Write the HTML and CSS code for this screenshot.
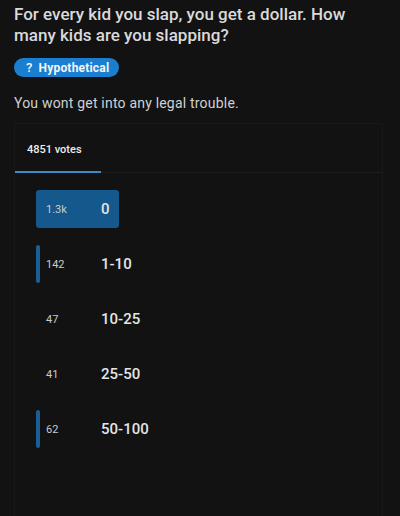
FILE: index.html
```html
<!DOCTYPE html>
<html>
<head>
<meta charset="utf-8">
<link rel="stylesheet" href="styles.css">
</head>
<body>
<div class="page">
  <h1 class="title">For every kid you slap, you get a dollar. How many kids are you slapping?</h1>
  <div class="flair"><span class="q">?</span> Hypothetical</div>
  <p class="body">You wont get into any legal trouble.</p>
  <div class="card">
    <div class="tabs">
      <div class="tab">4851 votes</div>
    </div>
    <div class="options">
      <div class="opt">
        <div class="bar-area"><div class="bar full"></div><span class="count">1.3k</span></div>
        <span class="label">0</span>
      </div>
      <div class="opt">
        <div class="bar-area"><div class="bar thin"></div><span class="count">142</span></div>
        <span class="label">1-10</span>
      </div>
      <div class="opt">
        <div class="bar-area"><span class="count">47</span></div>
        <span class="label">10-25</span>
      </div>
      <div class="opt">
        <div class="bar-area"><span class="count">41</span></div>
        <span class="label">25-50</span>
      </div>
      <div class="opt">
        <div class="bar-area"><div class="bar thin"></div><span class="count">62</span></div>
        <span class="label">50-100</span>
      </div>
    </div>
  </div>
</div>
</body>
</html>
```
FILE: styles.css
```css
html, body {
  margin: 0;
  padding: 0;
  background: #121212;
  height: 100%;
}
body {
  font-family: Roboto, "Noto Sans", "Liberation Sans", sans-serif;
  color: #d7dadc;
}
.page {
  padding: 4px 16px 0 14px;
}
.title {
  margin: 0;
  font-size: 17px;
  line-height: 21px;
  font-weight: 500;
  color: #d9dadb;
}
.flair {
  display: inline-flex;
  align-items: center;
  margin-top: 12px;
  height: 19px;
  padding: 0 10px 0 12px;
  border-radius: 10px;
  background: #1a7fd0;
  color: #f2f6fa;
  font-size: 12px;
  font-weight: 700;
  letter-spacing: 0.2px;
}
.flair .q {
  margin-right: 6px;
  font-weight: 500;
  font-size: 13px;
}
.body {
  margin: 17px 0 0;
  font-size: 14px;
  line-height: 18px;
  color: #cfd1d3;
  letter-spacing: 0.2px;
}
.card {
  margin-top: 11px;
  width: 369px;
  height: 400px;
  border: 1px solid #181818;
  border-bottom: none;
  box-sizing: border-box;
}
.tabs {
  border-bottom: 1px solid #1e1e1e;
  height: 48px;
  display: flex;
}
.tab {
  width: 86px;
  box-sizing: border-box;
  padding-left: 12px;
  padding-top: 19px;
  font-size: 11px;
  font-weight: 500;
  color: #eceeef;
  border-bottom: 2px solid #3b8bc6;
  height: 49px;
}
.options {
  padding: 17px 0 0 21px;
  display: flex;
  flex-direction: column;
  gap: 17px;
}
.opt {
  display: flex;
  align-items: center;
  height: 38px;
}
.bar-area {
  position: relative;
  width: 65px;
  height: 38px;
  display: flex;
  align-items: center;
}
.bar {
  position: absolute;
  left: 0;
  top: 0;
  height: 38px;
  background: #15588c;
  border-radius: 3px;
}
.bar.full {
  width: 83px;
}
.bar.thin {
  width: 4px;
  border-radius: 2px;
  background: #1a5e96;
}
.count {
  position: relative;
  padding-left: 10px;
  font-size: 11px;
  color: #c9ccce;
}
.label {
  position: relative;
  font-size: 15px;
  font-weight: 500;
  color: #e3e5e6;
}
```
